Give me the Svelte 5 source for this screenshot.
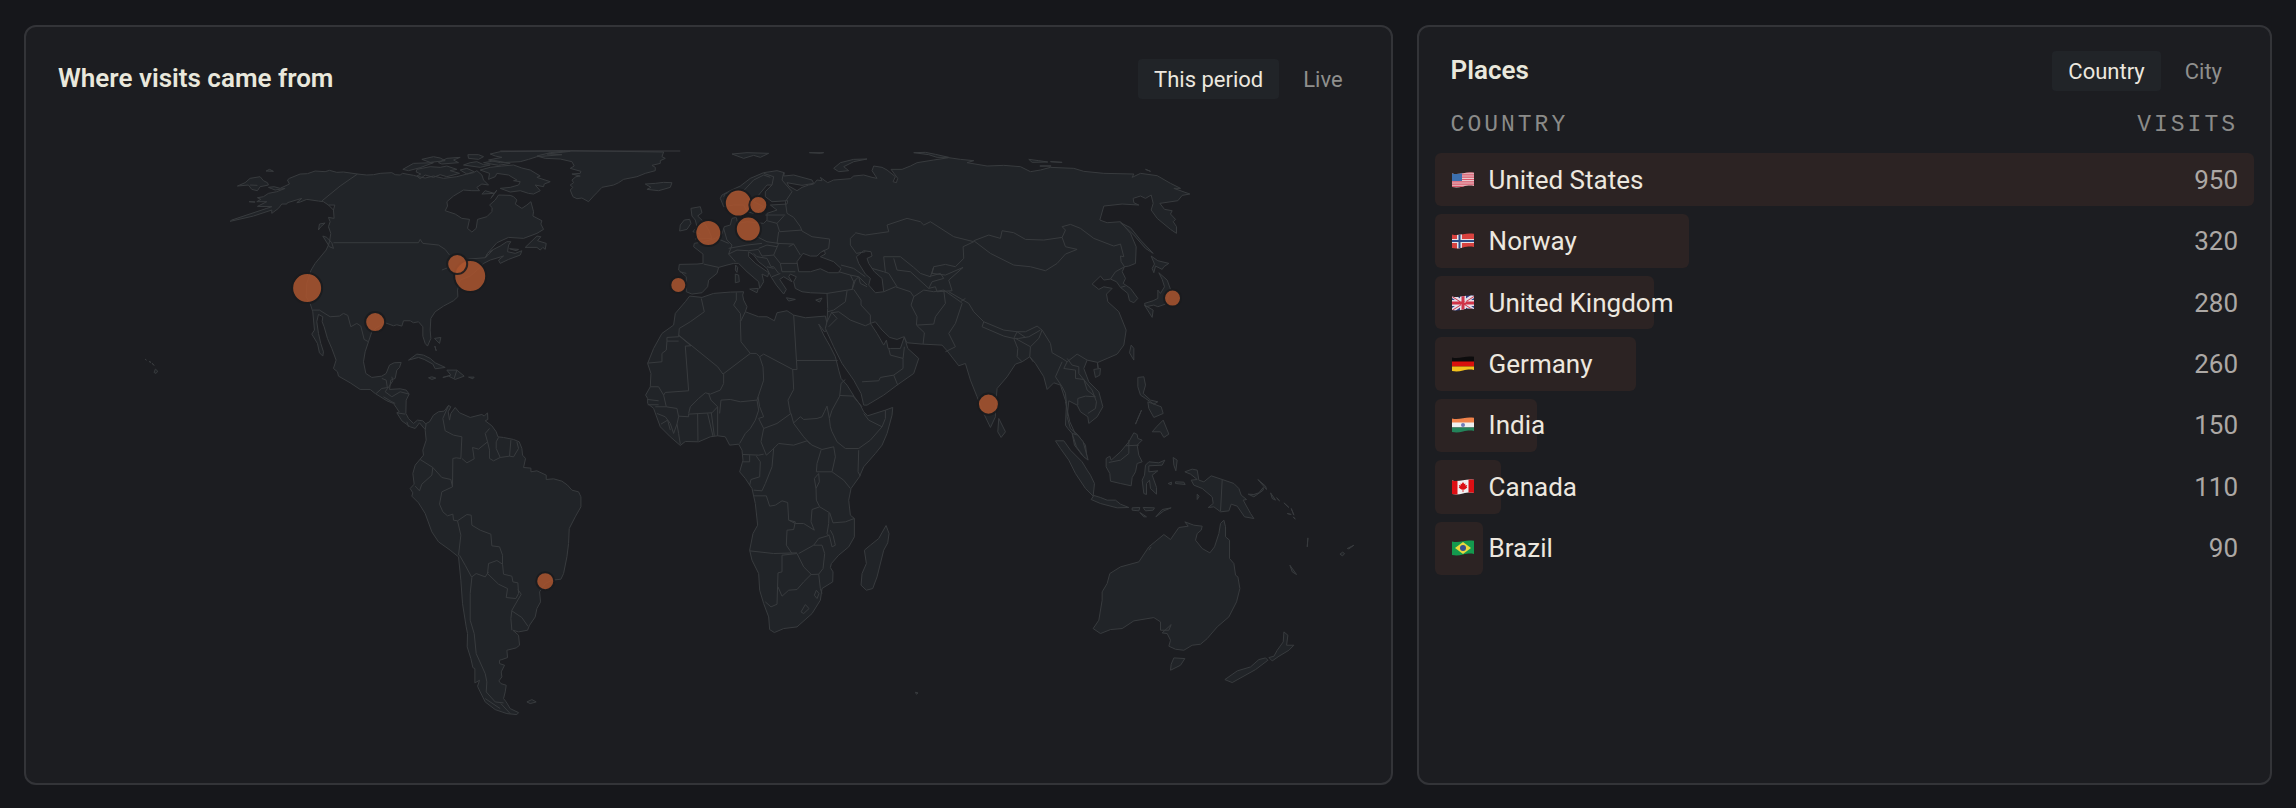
<!--
  Visit geography: a world map with one bubble per city, beside the
  ranked list of places the visits came from.
-->
<script lang="ts">
  interface Shape {
    fill: string;
    d: string;
  }
  interface Place {
    name: string;
    visits: number;
    flag: Shape[];
  }

  let period = $state('This period');
  let scope = $state('Country');

  const rect = (x: number, y: number, w: number, h: number) => `M${x} ${y}h${w}v${h}h${-w}z`;

  const places: Place[] = [
    {
      name: 'United States',
      visits: 950,
      flag: [
        { fill: '#e9c9cc', d: rect(0, 0, 22, 16) },
        { fill: '#d8566a', d: [0, 1, 2, 3, 4, 5, 6].map((i) => rect(0, i * 2.3, 22, 1.2)).join('') },
        { fill: '#3c6fae', d: rect(0, 0, 10, 9) },
      ],
    },
    {
      name: 'Norway',
      visits: 320,
      flag: [
        { fill: '#d8423f', d: rect(0, 0, 22, 16) },
        { fill: '#e6e2e6', d: rect(5, 0, 5, 16) + rect(0, 6, 22, 4) },
        { fill: '#2c4c86', d: rect(6.5, 0, 2, 16) + rect(0, 7, 22, 2) },
      ],
    },
    {
      name: 'United Kingdom',
      visits: 280,
      flag: [
        { fill: '#2f3f86', d: rect(0, 0, 22, 16) },
        { fill: '#e3dfe8', d: 'M0 0h3L22 13v3h-3L0 3zM22 0v3L3 16H0v-3L19 0z' + rect(8, 0, 6, 16) + rect(0, 5, 22, 6) },
        { fill: '#cf3347', d: 'M0 1l22 14v1L0 2zM22 1L0 15v1L22 2z' + rect(9.5, 0, 3, 16) + rect(0, 6.5, 22, 3) },
      ],
    },
    {
      name: 'Germany',
      visits: 260,
      flag: [
        { fill: '#0d0c0d', d: rect(0, 0, 22, 6) },
        { fill: '#d9110d', d: rect(0, 5.5, 22, 5) },
        { fill: '#f3c21c', d: rect(0, 10.5, 22, 6) },
      ],
    },
    {
      name: 'India',
      visits: 150,
      flag: [
        { fill: '#f0824a', d: rect(0, 0, 22, 6) },
        { fill: '#efeff0', d: rect(0, 5.5, 22, 5) },
        { fill: '#23835a', d: rect(0, 10.5, 22, 6) },
        { fill: '#6f7cba', d: 'M9 8a2 2 0 1 0 4 0a2 2 0 1 0-4 0z' },
      ],
    },
    {
      name: 'Canada',
      visits: 110,
      flag: [
        { fill: '#efeff0', d: rect(0, 0, 22, 16) },
        { fill: '#dc0f14', d: rect(0, 0, 5.5, 16) + rect(16.5, 0, 5.5, 16) },
        { fill: '#dc0f14', d: 'M11 3l1.3 2 1.2-.5-.3 2 2-.5-.7 1.8.8.7-2.6 2h-1.3V13h-.8v-2.5H9.300l-2.600-2 .8-.7L6.800 6l2 .5-.3-2 1.200.5z' },
      ],
    },
    {
      name: 'Brazil',
      visits: 90,
      flag: [
        { fill: '#149a4e', d: rect(0, 0, 22, 16) },
        { fill: '#e9d83f', d: 'M11 2l8 6-8 6-8-6z' },
        { fill: '#35508f', d: 'M8 8a3 3 0 1 0 6 0a3 3 0 1 0-6 0z' },
      ],
    },
  ];

  const top = Math.max(...places.map((p) => p.visits));

  const cities = [
    { name: 'San Francisco', x: 307, y: 288, r: 15 },
    { name: 'New York', x: 470, y: 276, r: 16 },
    { name: 'Toronto', x: 457, y: 264, r: 10 },
    { name: 'Austin', x: 375, y: 322, r: 10 },
    { name: 'Oslo', x: 738, y: 203, r: 13.5 },
    { name: 'London', x: 708, y: 233, r: 13 },
    { name: 'Berlin', x: 748, y: 229, r: 12.5 },
    { name: 'Stockholm', x: 758, y: 205, r: 9 },
    { name: 'Lisbon', x: 678, y: 285, r: 8 },
    { name: 'Bengaluru', x: 988, y: 404, r: 10.5 },
    { name: 'Tokyo', x: 1172, y: 298, r: 8.5 },
    { name: 'São Paulo', x: 545, y: 581, r: 9 },
  ];

  // Each region is drawn on its own grid, three units to one map unit.
  const regions = [
    {
      id: 'north-america',
      x: 200,
      y: 130,
      land: `
        M205 172L222 170 240 175 268 162 262 150 268 145 300 132 322 131 345 123 375 125 388 121 410 127 430 126 472 132 500 135 520 134 540 130 575 128 585 134 600 135 607 130 640 136 655 140 675 144 700 138 730 145 770 140 800 132 820 128 830 122 845 135 850 150 865 165 845 162 830 172 838 182 815 182 790 180 760 198 740 215 742 228 735 242 765 252 785 265 808 268 802 295 815 306 828 295 832 268 860 260 875 245 876 233 868 225 885 210 895 195 930 196 940 200 950 210 945 222 965 235 980 225 992 215 1000 245 998 258 1025 272 1022 282 1030 298 1010 310 970 325 925 322 890 338 862 370 856 383 880 358 900 348 920 335 932 335 925 345 922 365 945 370 965 362 960 375 925 388 900 400 895 390 910 378 870 390 850 400 840 412 810 438 780 450 772 480 773 500 760 512 730 528 705 545 692 565 690 600 692 625 682 648 675 640 668 618 668 590 655 575 640 578 630 572 610 572 605 588 590 584 580 587 555 578 530 592 515 605 505 635 495 665 490 695 497 730 515 742 545 738 558 730 568 705 582 698 603 697 598 712 590 720 585 745 572 750 568 778 600 776 618 780 627 792 618 810 617 850 625 865 640 880 652 870 668 872 680 885 680 900 672 895 658 878 645 895 630 890 605 872 590 848 597 845 580 820 560 812 525 790 510 778 480 778 450 758 415 738 412 725 400 715 408 690 395 655 382 625 372 590 366 575 368 560 355 553 350 575 355 610 362 640 370 665 368 678 358 668 352 640 335 612 343 600 338 545 330 520 318 500 320 460 333 420 345 400 378 360 385 345 388 335 392 310 385 290 390 275 385 262 402 265 400 240 404 225 385 225 370 215 355 213 320 208 300 216 290 218 305 205 262 218 260 222 245 222 235 235 215 250 215 240 160 258 90 274 95 270 200 235 215 230 172 229 200 215 170 215 182 208 172 203 190 200 205 190 230 185 255 175 225 180 215 176z
        M1035 85L1010 78 1050 68 1110 62 1250 64 1390 66 1385 80 1395 85 1380 92 1380 100 1355 106 1365 112 1365 122 1335 130 1310 140 1270 148 1255 158 1240 165 1205 172 1190 188 1180 198 1165 215 1145 204 1130 206 1118 200 1110 180 1118 172 1110 165 1120 158 1115 150 1127 140 1140 138 1115 132 1140 130 1142 124 1110 115 1122 108 1115 95 1080 87z
        M870 112L905 108 940 105 965 114 990 120 1020 138 1010 142 1050 155 1032 162 1030 170 1005 165 1020 182 1000 192 985 190 960 182 930 186 900 175 930 172 955 165 960 155 940 152 950 150 925 135 890 130 885 140 865 148 868 130 840 120z
        M650 118L690 110 720 112 740 108 770 118 750 122 778 130 740 140 720 134 700 142 675 135 660 146 650 138 662 132 648 126z
        M608 118L640 100 700 98 660 113 625 122z M665 88L700 80 720 84 735 92 690 97z M740 85L780 82 760 90 775 98 725 102 715 98z
        M790 105L810 98 830 95 850 104 870 105 840 112z M803 74L835 74 850 80 835 88 805 85z M780 120L800 115 822 125 800 132z
        M870 72L900 65 1090 62 1110 64 1040 72 1085 74 1010 80 985 88 960 95 900 98 865 90 905 82 885 78z M850 98L885 92 930 100 895 106z
        M975 352L1010 318 1022 320 1012 332 1038 340 1035 358 1028 352 1020 360 1010 352z M928 356L948 362 955 358z
        M368 318L380 322 395 338 400 355 388 350z M358 282L375 279 362 290 355 300z M845 192L855 182 882 190z M872 205L890 180z
        M112 168L135 158 150 145 180 140 190 152 202 158 205 165 180 170 172 182 155 178 145 165z M198 123L208 118 220 124z M147 215L165 216z
        M625 690L650 672 670 675 690 685 705 698 735 712 705 716 698 702 672 688 655 682z M740 720L770 720 792 738 765 748 745 738 728 742 752 735z
        M685 743L695 740 707 744 695 748z M805 741L822 741 818 746z M703 625L722 622 718 640z M704 648L708 662z
        M-165 687L-161 690z M-153 694L-147 697z M-144 699L-138 706z M-134 717L-127 723 -132 730 -138 727z`,
      lines: `
        M472 132L420 168 365 213 M385 225L400 240 M400 338L655 338 660 328 668 340 715 345 735 358 748 375 M725 420L745 412 742 395 M805 387L855 383 862 370 880 358
        M338 540L358 540 390 560 418 558 430 550 443 556 452 590 470 580 482 588 492 628 505 635 M575 740L578 752 565 772 545 775 528 790 M545 745L558 750 562 775 555 785 575 800 600 785 627 792
        M550 800L575 815 585 820 M590 848L615 852 M770 720L762 745 M150 165L172 166 M620 875L625 890`,
    },
    {
      id: 'south-america',
      x: 370,
      y: 380,
      land: `
        M168 130L178 125 190 105 205 95 222 93 235 76 242 80 234 95 238 120 242 100 255 82 268 98 300 112 335 103 342 108 352 98 353 118 345 122 365 137 378 155 383 170 400 172 430 178 447 185 455 205 457 225 466 235 460 262 482 264 482 275 500 272 528 285 528 298 550 296 575 303 592 315 605 330 625 335 632 350 632 380 615 410 597 445 595 490 590 530 580 580 572 597 545 600 525 610 508 635 511 665 500 685 495 710 478 735 472 750 445 755 428 750 445 765 448 795 438 803 410 810 412 832 395 838 388 840 388 850 403 855 393 875 395 890 386 902 392 910 408 915 405 935 400 955 408 965 420 985 445 997 440 1003 410 1000 375 988 345 965 330 935 322 918 328 900 314 908 314 865 308 862 302 835 291 800 292 760 288 740 277 670 272 600 265 530 240 510 205 485 185 455 165 400 145 368 125 348 128 338 120 325 132 312 128 280 135 255 160 225 158 210 168 180 165 150z
        M470 965L485 958 498 965 480 970z`,
      lines: `
        M235 76L218 115 225 152 250 165 275 170 272 235 258 233 248 235 247 320 M275 235L290 248 312 236 307 202 325 207 352 185 345 160 358 145
        M352 185L358 210 358 235 370 242 390 232 378 205 378 185 385 172 M390 232L418 228 422 180 M418 228L430 230 445 205 440 185
        M150 238L188 262 185 285 155 312 148 332 135 318 M188 262L215 292 242 298 247 320 M247 320L215 335 208 372 218 395 232 407 248 402 250 420 262 422 290 403 303 405 305 435 330 450 362 462 365 497 388 500 397 525 397 552
        M262 422L272 465 265 525 M268 525L285 555 305 592 300 640 300 720 312 760 318 820 345 880 350 905 348 935 375 965 400 968
        M305 590L318 580 345 590 355 575 M397 552L380 541 355 550 352 580 385 612 412 625 408 652 437 655 445 640 443 608 428 605 425 588 400 582z
        M443 628L453 642 425 690 422 715 425 750 M425 692L455 712 473 738 M392 970L420 1000 M345 955L390 985`,
    },
    {
      id: 'africa',
      x: 630,
      y: 270,
      land: `
        M178 78L215 82 250 70 300 66 340 65 337 75 340 90 350 110 345 125 385 140 410 140 432 152 440 128 470 122 490 135 525 143 560 140 585 138 590 160 593 180 582 185 565 162 580 195 600 230 615 260 625 300 632 325 650 345 672 380 690 405 700 425 712 437 765 420 787 412 785 435 770 490 755 525 735 550 700 590 687 620 662 655 655 690 660 735 672 745 672 800 655 830 625 855 603 880 600 892 608 905 607 935 575 955 570 990 545 1030 500 1070 460 1075 432 1087 418 1078 415 1040 400 1000 388 960 385 910 365 870 358 840 368 790 382 765 375 700 365 655 345 625 328 605 338 570 335 540 325 522 298 525 285 500 262 497 240 500 205 515 165 514 150 526 120 500 90 470 70 415 52 400 52 385 46 375 60 350 62 310 52 280 70 235 95 190 130 165 135 130 165 95z
        M767 766L776 790 772 818 760 840 740 920 727 955 708 960 692 945 695 910 708 880 702 840 720 825 745 805z M855 1266L863 1268 858 1272z`,
      lines: `
        M213 85L222 125 180 155 147 175 145 200 110 202 110 213 145 213 M110 213L108 240 95 250 95 275 52 279 M145 195L262 290 278 312 360 250 M318 67L318 90 310 105 330 130 332 152 345 125
        M330 150L332 215 360 250 378 250 388 260 400 252 487 298 M490 135L500 298 487 298 490 358 473 390 480 430 M500 271L622 271
        M145 196L182 227 165 228 175 362 105 367 100 375 85 350 60 350 M100 375L108 410 75 410 M52 388L85 392 M52 404L85 404
        M175 430L180 410 205 385 225 368 240 372 270 360 280 340 280 312 M235 370L242 390 262 410 245 428 175 432 175 440 145 438 M108 410L140 415 145 440 140 462 130 490 120 460 105 440 80 430 M92 462L112 450 120 480 M140 462L145 490 150 522
        M202 430L203 512 M232 430L248 498 M243 428L252 497 M262 410L262 497 M268 430L272 390 300 388 330 395 380 390 400 330 398 290 388 260
        M380 390L385 420 375 450 360 475 345 490 328 520 M383 380L388 410 400 440 385 445 400 475 440 460 482 430 490 460 520 500 540 522
        M400 475L392 515 408 555 425 540 435 530 445 520 490 525 530 512 M490 458L510 440 520 448 560 445 575 440 582 425 590 408 597 445 605 420 628 378 632 340 645 328
        M628 376L668 378 695 410 M597 445L600 470 605 485 620 515 645 535 685 535 720 510 755 470 715 450 700 430 M685 540L683 605 690 618 M765 420L765 445 755 470
        M530 512L545 525 575 538 610 530 615 560 605 605 640 630 660 655 M572 540L560 580 558 605 605 605 M565 610L552 625 557 655 567 635z M557 655L558 690 568 710
        M568 710L598 728 608 758 645 755 672 745 M568 710L545 718 542 755 552 780 520 760 495 760 475 750 M596 728L595 760 590 790 598 800 605 830 615 825 608 795 600 780
        M370 677L408 677 418 708 435 705 455 692 472 697 475 750 495 755 490 778 470 780 468 825 485 850 M358 842L430 850 500 848 M455 855L455 905 443 908 440 1002 422 1010 405 995
        M443 950L455 978 475 960 500 958 520 935 542 913 565 912 M455 855L500 850 520 890 542 912 M505 850L550 825 565 805 598 795 M550 825L575 825 583 850 578 895 565 912 570 955 575 970
        M512 1025L525 1003 536 1015 520 1030z M558 960L566 970 560 985 552 975z M338 553L385 555 400 552 M338 575L358 575 358 555 M378 558L390 575 388 620 362 628 358 645 M430 535L425 590 405 640 395 662 370 660`,
    },
    {
      id: 'eurasia',
      x: 620,
      y: 130,
      land: `
        M305 195L330 182 360 168 390 145 430 128 470 122 492 128 490 138 520 135 575 150 580 160 545 166 500 158 505 168 530 182 545 172 565 165 580 162 590 150 605 152 600 142 622 158 640 150 690 146 700 138 730 135 755 142 770 145 755 122 760 108 785 112 800 120 825 140 818 155 828 158 832 145 812 118 845 118 870 108 890 98 940 90 985 83 1020 88 1060 92 1040 98 1100 108 1150 106 1200 110 1230 125 1260 120 1290 112 1360 115 1390 124 1450 130 1540 132 1535 142 1560 130 1610 137 1650 160 1680 175 1660 175 1708 192 1685 196 1672 212 1618 220 1632 238 1655 242 1650 252 1665 268 1658 275 1668 290 1668 310 1650 298 1610 265 1592 240 1598 220 1592 195 1575 205 1560 198 1538 205 1540 218 1555 225 1505 222 1450 228 1438 270 1460 278 1500 275 1530 310 1547 350 1545 400 1525 408 1512 410 1505 425 1515 445 1508 460 1530 475 1552 505 1540 518 1527 512 1522 490 1500 472 1488 455 1470 447 1450 450 1440 438 1415 462 1435 478 1450 470 1475 475 1458 492 1462 515 1495 545 1517 600 1510 645 1490 672 1460 685 1432 697 1400 690 1390 715 1405 755 1435 785 1447 830 1430 860 1405 880 1402 860 1380 845 1370 825 1345 812 1340 860 1350 895 1370 912 1395 945 1400 985 1385 975 1362 945 1355 910 1342 895 1335 885 1338 820 1320 765 1300 758 1280 778 1270 740 1245 700 1228 680 1205 695 1185 702 1160 740 1130 775 1125 830 1125 860 1110 892 1090 850 1070 800 1050 750 1035 700 1015 707 980 662 965 645 905 642 860 638 850 620 830 628 808 622 785 600 765 575 750 580 770 610 790 645 798 630 803 655 810 655 840 655 852 620 862 655 895 685 880 730 830 765 790 795 740 825 730 825 722 790 700 750 665 700 640 650 615 595 620 575 622 535 620 490 570 488 545 485 525 475 520 455 528 440 510 432 505 440 515 455 490 440 478 448 498 478 490 492 468 465 452 440 440 415 415 395 400 375 385 365 385 380 405 400 445 428 442 440 425 432 430 455 418 475 415 455 380 425 355 400 340 400 320 405 295 412 290 430 265 450 262 470 245 488 215 492 198 485 198 440 175 420 177 403 230 402 248 400 248 372 220 350 222 340 250 335 285 325 305 312 312 290 330 285 335 265 348 262 352 280 380 275 430 280 440 270 440 250 470 240 450 225 500 222 502 212 455 215 435 200 435 185 455 165 440 165 415 195 400 215 430 230 400 250 380 245 370 225 340 225 310 230 300 205z
        M212 235L240 230 245 248 232 258 250 275 265 300 275 325 225 327 240 312 218 305 230 290 225 270 215 258z M208 268L212 280 200 298 178 303 180 285 192 270z
        M75 162L105 160 130 157 155 158 150 172 115 182 80 178 92 172z M335 72L380 68 445 70 420 82 400 76 370 85z M640 115L660 98 700 88 740 87 700 95 670 110 685 122 655 125z
        M567 68L610 68 600 70z M880 68L915 67 945 73 985 82 950 82 925 74z M345 432L355 435 357 455 345 458z M346 405L352 412 350 427 345 420z M388 477L414 475 410 488z M498 503L525 508 505 513z M586 510L605 504 598 516z
        M1135 865L1155 905 1142 922 1132 905z M1532 645L1540 655 1540 690 1527 668z M1420 718L1440 715 1438 735 1425 742z M1431 698L1433 715z
        M1592 378L1612 392 1645 400 1630 410 1625 418 1605 408 1600 428 1595 415 1602 402z M1615 428L1640 450 1650 478 1640 510 1635 522 1612 530 1600 525 1575 530 1572 520 1598 512 1612 505 1612 480 1620 490 1632 470 1625 448z M1572 525L1598 540 1595 562z
        M1500 278L1530 293 1560 330 1598 370 1575 355 1540 315z M1552 742L1570 740 1575 765 1568 790 1590 810 1612 815 1600 822 1575 805 1560 795 1552 770z M1582 815L1622 830 1628 850 1600 862 1585 835z M1595 905L1610 888 1628 870 1645 912 1630 922 1620 905z M1563 840L1545 882z
        M1225 88L1255 92 1282 96 1235 97z M1290 95L1325 97z M1258 108L1292 108z M1575 118L1590 124z`,
      water: `
        M535 425L530 395 548 370 570 378 590 378 600 368 612 360 615 372 600 380 640 395 662 415 655 428 625 428 600 416 570 425z
        M745 465L765 488 790 485 785 445 762 425 745 400 740 385 755 378 752 365 730 362 708 380 715 400 735 432 750 445z`,
      lines: `
        M310 200L315 190 370 182 400 150 430 135 450 142 M430 130L460 140 455 165 M490 128L485 150 515 185 495 215 500 250 520 262 540 290 545 303 575 320 628 327 625 355 605 365
        M435 255L495 255 M440 272L470 280 490 258 M470 280L478 305 545 300 M475 305L470 340 520 342 540 375 M520 342L505 350 M410 320L440 335 475 340 460 375 480 400 530 400 M480 400L485 425 525 425
        M325 355L380 345 425 340 M415 355L440 345 470 350 M325 372L350 360 385 362 415 358 M400 370L410 380 440 385 452 410 460 410 475 430 M415 360L425 378 460 375 M440 410L460 415 M250 402L295 412 M310 295L320 330 335 345 325 372 345 395 M290 325L325 340 M198 430L178 425
        M455 440L480 430 M655 425L690 435 700 455 695 478 620 490 M662 405L700 415 735 440 M690 435L715 440 740 465 M700 455L715 440 720 460 740 470 M680 482L675 515 640 540 622 545 M700 478L722 510 722 525 750 555 750 580 735 587 690 570 655 545 635 548 650 565 625 590 M695 480L705 450 M620 575L635 545
        M725 755L775 752 780 742 820 735 848 715 848 685 810 675 805 655 M848 685L852 650 M820 735L832 765 M790 485L825 470 870 485 880 500 872 525 890 560 888 585 912 608 908 642
        M880 500L910 480 940 485 970 480 975 520 945 560 940 582 890 585 M925 475L945 470 950 485 995 482 M970 480L1020 515 1035 505 M985 485L1045 520 1060 545 1090 575 M1020 515L1025 520 1005 580 985 610 1005 650 975 665
        M1090 575L1085 590 1150 618 1180 625 1190 605 1150 600z M705 310L690 325 690 345 708 370 735 365 M705 308L735 315 770 310 805 305 800 285 860 265 900 275 910 285 930 275 1000 320 1060 335 1028 350 1030 385 1005 410 975 403 940 410 930 440 900 430 880 412 840 380 790 380 795 425
        M755 415L790 425 805 430 830 470 M820 385L830 420 870 425 925 475 M940 410L935 430 975 435 1028 412 985 450 995 482 M925 440L960 430 970 445 935 455 M925 475L935 455
        M1060 332L1105 315 1140 325 1145 302 1180 308 1215 328 1270 330 1325 322 1335 350 1370 358 1335 372 1310 400 1275 422 1230 410 1180 405 1110 370 1060 332 M1325 322L1335 300 1325 290 1350 283 1380 295 1420 325 1480 348 1500 342 1510 380 1500 378 1502 395 1512 410 1485 425 1470 447 M1500 472L1515 468
        M1190 605L1215 605 1250 588 1265 600 1290 640 1295 668 1325 685 1340 695 1370 672 1400 690 M1180 625L1195 625 1225 620 1260 600 M1180 625L1192 655 1190 680 1205 695 M1185 625L1230 650 1228 680 1238 695 M1230 650L1255 625 1265 600 M1190 605L1215 622
        M1325 695L1305 740 1325 770 1335 790 1338 820 M1340 695L1330 715 1365 720 1365 745 1390 748 1400 780 1425 800 M1340 685L1355 705 1375 710 1375 730 1415 780 1428 815 1425 835 1402 850 M1372 825L1372 805 1395 798 1425 800`,
    },
    {
      id: 'oceania',
      x: 1020,
      y: 400,
      land: `
        M105 122L130 122 150 150 185 185 200 210 210 225 222 250 218 288 195 265 165 220 145 180 120 145z M212 298L220 286 240 292 260 300 285 300 300 312 325 322 290 323 240 310z
        M335 323L358 322 355 332 335 330z M368 322L402 323 398 330 375 332z M358 337L378 350 370 350z M406 350L425 328 452 323 430 332z
        M257 175L268 168 272 180 300 155 325 125 340 98 350 103 352 115 365 120 350 135 355 165 365 185 350 190 345 215 335 232 332 257 300 250 270 243 268 220 257 200z
        M375 195L385 185 415 188 433 180 425 195 385 197 385 215 412 212 395 225 408 262 408 282 390 265 387 240 378 250 378 283 370 280 365 240 372 225z M458 172L470 180 466 212 460 195z
        M465 245L490 246 494 253 465 250z M443 250L453 246 452 254z M530 282L536 288 530 298z
        M493 215L515 207 530 210 535 240 550 245 572 227 605 238 640 250 655 265 662 285 678 298 668 300 690 340 700 355 672 350 650 318 632 312 625 332 600 335 580 320 563 322 578 310 575 290 545 265 520 255 512 240 530 238 510 222z
        M683 282L700 290 728 270 728 262 715 278 700 283z M712 238L735 258 738 268z M750 278L765 300 755 295z M768 293L777 302z M790 308L805 322z M812 325L820 345z M800 340L812 343z M818 350L824 357z M862 413L860 440z M808 495L828 523 815 515z M958 462L966 456 972 460 966 467z M980 445L1000 435 985 446z
        M493 365L520 375 545 378 542 390 530 400 525 420 545 445 568 458 582 440 595 400 600 370 610 360 615 380 615 410 627 420 627 475 640 490 645 525 652 530 658 565 648 605 625 650 590 680 560 715 540 732 515 735 490 750 465 747 445 738 450 720 440 700 425 698 452 673 445 690 420 690 420 665 400 652 340 662 305 685 270 688 240 700 218 685 235 660 245 600 245 575 260 550 268 520 300 500 355 485 385 440 430 403 450 418 475 382 503 378z
        M460 773L493 775 480 795 450 810 452 792z M790 695L802 705 798 735 820 735 805 750 775 768 755 782 745 772 760 768 770 750 788 725z M735 773L742 780 705 808 635 847 613 838 650 812 690 800 715 778z`,
      lines: `M265 187L300 180 325 160 325 120 M316 137L355 135 M605 238L600 333 M385 450L392 440`,
    },
    {
      id: 'malaya',
      x: 1020,
      y: 400,
      land: `M155 100L172 105 188 125 203 180 190 170 168 140z`,
      lines: `M135 5L148 65 165 102`,
    },
  ];
</script>

{#snippet switcher(label: string, options: string[], current: string, pick: (o: string) => void)}
  <div class="switcher" role="group" aria-label={label}>
    {#each options as option (option)}
      <button type="button" class:active={option === current} aria-pressed={option === current} onclick={() => pick(option)}>
        {option}
      </button>
    {/each}
  </div>
{/snippet}

<main class="board">
  <section class="panel">
    <header class="panel__head">
      <h2>Where visits came from</h2>
      {@render switcher('Time range', ['This period', 'Live'], period, (o) => (period = o))}
    </header>
    <svg class="map" viewBox="58 130 1300 621" role="img" aria-label="World map of visits">
      {#each regions as region (region.id)}
        <g transform="translate({region.x} {region.y}) scale({1 / 3})">
          <path class="land" d={region.land} />
          {#if region.water}
            <path class="water" d={region.water} />
          {/if}
          <path class="line" d={region.lines} />
        </g>
      {/each}
      <path class="clip-edge" d="M500 151H680" />
      {#each cities as city (city.name)}
        <circle class="bubble" cx={city.x} cy={city.y} r={city.r} />
      {/each}
    </svg>
  </section>

  <section class="panel panel--places">
    <header class="panel__head">
      <h2>Places</h2>
      {@render switcher('Group by', ['Country', 'City'], scope, (o) => (scope = o))}
    </header>
    <table class="places">
      <thead>
        <tr>
          <th scope="col">Country</th>
          <th scope="col">Visits</th>
        </tr>
      </thead>
      <tbody>
        {#each places as place (place.name)}
          <tr style:--share={(place.visits / top).toFixed(4)}>
            <td class="places__name">
              <svg class="flag" viewBox="-1 0 24 16" aria-hidden="true">
                <clipPath id="wave-{place.name.replace(' ', '-')}">
                  <path d="M0 1.5C4 2.5 7 2 11 1.2S18 .2 22 .8V14C18 13.2 15 13.7 11 14.6S4 15.8 0 15z" />
                </clipPath>
                <g clip-path="url(#wave-{place.name.replace(' ', '-')})">
                  {#each place.flag as shape}
                    <path fill={shape.fill} d={shape.d} />
                  {/each}
                </g>
              </svg>
              {place.name}
            </td>
            <td class="places__visits">{place.visits}</td>
          </tr>
        {/each}
      </tbody>
    </table>
  </section>
</main>

<style>
  :global(body) {
    background: #16171b;
  }
  .board {
    display: grid;
    grid-template-columns: 1.6fr 1fr;
    gap: 24px;
    padding: 25px 24px 23px;
    font-family: Roboto, sans-serif;
    color: #ece7df;
  }
  .panel {
    min-width: 0;
    padding: 32px;
    background: #1c1d21;
    border: 2px solid #333438;
    border-radius: 12px;
  }
  .panel--places {
    padding-top: 24px;
  }
  .panel__head {
    display: flex;
    align-items: center;
    justify-content: space-between;
    height: 40px;
  }
  h2 {
    margin: 0;
    padding-bottom: 2px;
    font-size: 26px;
    font-weight: 600;
    line-height: 36px;
    color: #e9e8dc;
  }
  .switcher {
    display: flex;
    gap: 8px;
  }
  button {
    height: 40px;
    padding: 0 16px;
    border: 0;
    border-radius: 4px;
    background: none;
    font: inherit;
    font-size: 22px;
    color: #8f8f8d;
    cursor: pointer;
  }
  button.active {
    background: #212428;
    color: #ece7df;
  }

  .map {
    display: block;
    width: 100%;
    margin-top: 31px;
  }
  .land,
  .water,
  .line {
    stroke: #383b3e;
    stroke-width: 1px;
    stroke-linejoin: round;
    vector-effect: non-scaling-stroke;
  }
  .land {
    fill: #212428;
  }
  .water {
    fill: #1c1d21;
  }
  .line,
  .clip-edge {
    fill: none;
  }
  .clip-edge {
    stroke: #383b3e;
  }
  .bubble {
    fill: #ab552f;
    stroke: #1a1b1e;
    stroke-width: 2px;
    opacity: 0.86;
  }

  .places {
    display: block;
    margin: 10px -16px 0;
  }
  thead,
  tbody {
    display: grid;
  }
  tr {
    display: flex;
    align-items: center;
    justify-content: space-between;
    padding: 0 16px;
  }
  th {
    padding: 0;
    font-family: 'Liberation Mono', monospace;
    font-size: 23px;
    font-weight: 400;
    line-height: 48px;
    letter-spacing: 3px;
    text-transform: uppercase;
    color: #8b8b89;
  }
  tbody {
    grid-auto-rows: 1fr;
    gap: 8px;
    min-height: 422px;
    margin-top: 4px;
  }
  tbody tr {
    position: relative;
    isolation: isolate;
  }
  tbody tr::before {
    content: '';
    position: absolute;
    inset: 0 auto 0 0;
    z-index: -1;
    width: calc(var(--share) * (100% + 32px) - 32px);
    border-radius: 6px;
    background: #2c2323;
  }
  td {
    padding: 0;
    font-size: 26px;
    line-height: 36px;
  }
  .places__name {
    display: flex;
    align-items: center;
    gap: 14px;
  }
  .places__visits {
    color: #aca8a5;
  }
  .flag {
    width: 24px;
    height: 16px;
  }
</style>
